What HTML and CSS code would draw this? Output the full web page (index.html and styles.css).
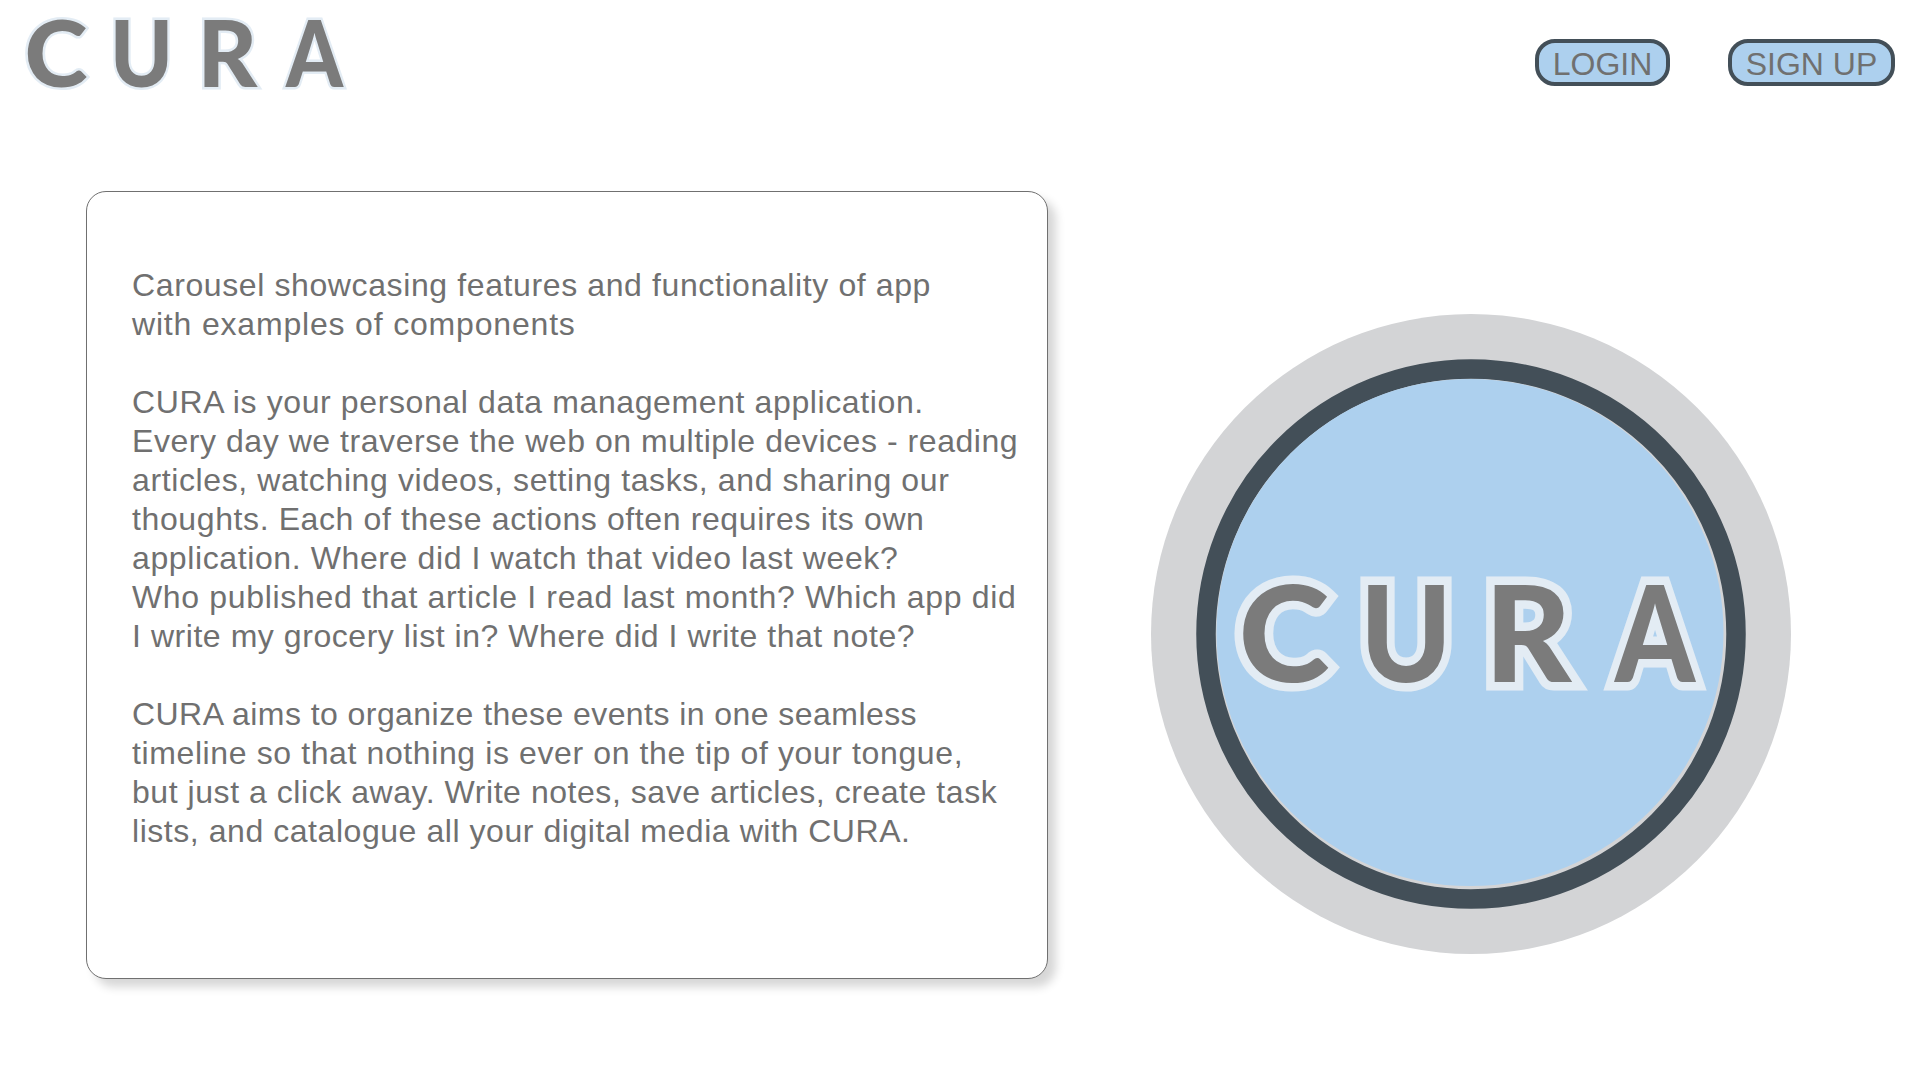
FILE: index.html
```html
<!DOCTYPE html>
<html lang="en">
<head>
<meta charset="utf-8">
<title>CURA</title>
<link rel="stylesheet" href="styles.css">
</head>
<body>
<header class="header">
  <svg class="wordmark" viewBox="0 0 360 108" role="img" aria-label="CURA">
    <text class="letters letters-small" y="87"><tspan x="56" textLength="63" lengthAdjust="spacingAndGlyphs">C</tspan><tspan x="141.5" textLength="63" lengthAdjust="spacingAndGlyphs">U</tspan><tspan x="227.5">R</tspan><tspan x="314.5" textLength="57" lengthAdjust="spacingAndGlyphs">A</tspan></text>
  </svg>
  <nav class="nav">
    <a class="button">LOGIN</a>
    <a class="button button-wide">SIGN UP</a>
  </nav>
</header>
<main class="main">
  <section class="card">
    <p><span class="line">Carousel showcasing features and functionality of app</span><span class="line airy">with examples of components</span></p>
    <p><span class="line">CURA is your personal data management application.</span><span class="line snug">Every day we traverse the web on multiple devices - reading</span><span class="line">articles, watching videos, setting tasks, and sharing our</span><span class="line">thoughts. Each of these actions often requires its own</span><span class="line">application. Where did I watch that video last week?</span><span class="line loose">Who published that article I read last month? Which app did</span><span class="line snug">I write my grocery list in? Where did I write that note?</span></p>
    <p><span class="line tight">CURA aims to organize these events in one seamless</span><span class="line">timeline so that nothing is ever on the tip of your tongue,</span><span class="line snug">but just a click away. Write notes, save articles, create task</span><span class="line snug">lists, and catalogue all your digital media with CURA.</span></p>
  </section>
  <svg class="badge" viewBox="0 0 640 640" role="img" aria-label="CURA badge">
    <circle cx="320" cy="320" r="320" fill="#d3d4d6"/>
    <circle cx="320" cy="320" r="265" fill="none" stroke="#434f58" stroke-width="19.5"/>
    <circle cx="319" cy="318.5" r="253.5" fill="#add0ee"/>
    <text class="letters letters-large" y="368"><tspan x="133" textLength="91" lengthAdjust="spacingAndGlyphs">C</tspan><tspan x="255" textLength="92" lengthAdjust="spacingAndGlyphs">U</tspan><tspan x="377">R</tspan><tspan x="504" textLength="80" lengthAdjust="spacingAndGlyphs">A</tspan></text>
  </svg>
</main>
</body>
</html>
```

FILE: styles.css
```css
* { box-sizing: border-box; }
body {
  margin: 0;
  min-height: 100vh;
  background: #fff;
  color: #707070;
  font-family: "Liberation Sans", Arial, sans-serif;
  font-size: 32px;
  line-height: 39px;
}
.header {
  display: flex;
  justify-content: space-between;
  align-items: flex-start;
  height: 108px;
  padding-right: 25px;
}
.wordmark { width: 360px; height: 108px; overflow: visible; }
.nav { display: flex; gap: 58px; padding-top: 39px; }
.button {
  width: 135px;
  height: 47px;
  border: 4px solid #434f58;
  border-radius: 20px;
  background: #add0ee;
  text-align: center;
  line-height: 42px;
  white-space: nowrap;
}
.button-wide { width: 167px; }
.main {
  display: flex;
  align-items: flex-start;
  gap: 103px;
  padding: 83px 0 0 86px;
}
.card {
  width: 962px;
  height: 788px;
  padding: 74px 0 0 45px;
  border: 1px solid #707070;
  border-radius: 20px;
  background: #fff;
  box-shadow: 8px 8px 10px rgba(0, 0, 0, .16);
  white-space: nowrap;
}
.card p { margin: 0 0 39px; }
.line { display: block; letter-spacing: .61px; }
.tight { letter-spacing: .44px; }
.snug { letter-spacing: .55px; }
.loose { letter-spacing: .67px; }
.airy { letter-spacing: .82px; }
.badge { width: 640px; height: 640px; margin-top: 123px; }
.letters {
  font-family: Lato, sans-serif;
  font-weight: 900;
  fill: #7b7b7b;
  stroke: #e3ecf4;
  paint-order: stroke;
  text-anchor: middle;
}
.letters-small { font-size: 92px; stroke-width: 5px; }
.letters-large { font-size: 134px; stroke-width: 17px; }
```
